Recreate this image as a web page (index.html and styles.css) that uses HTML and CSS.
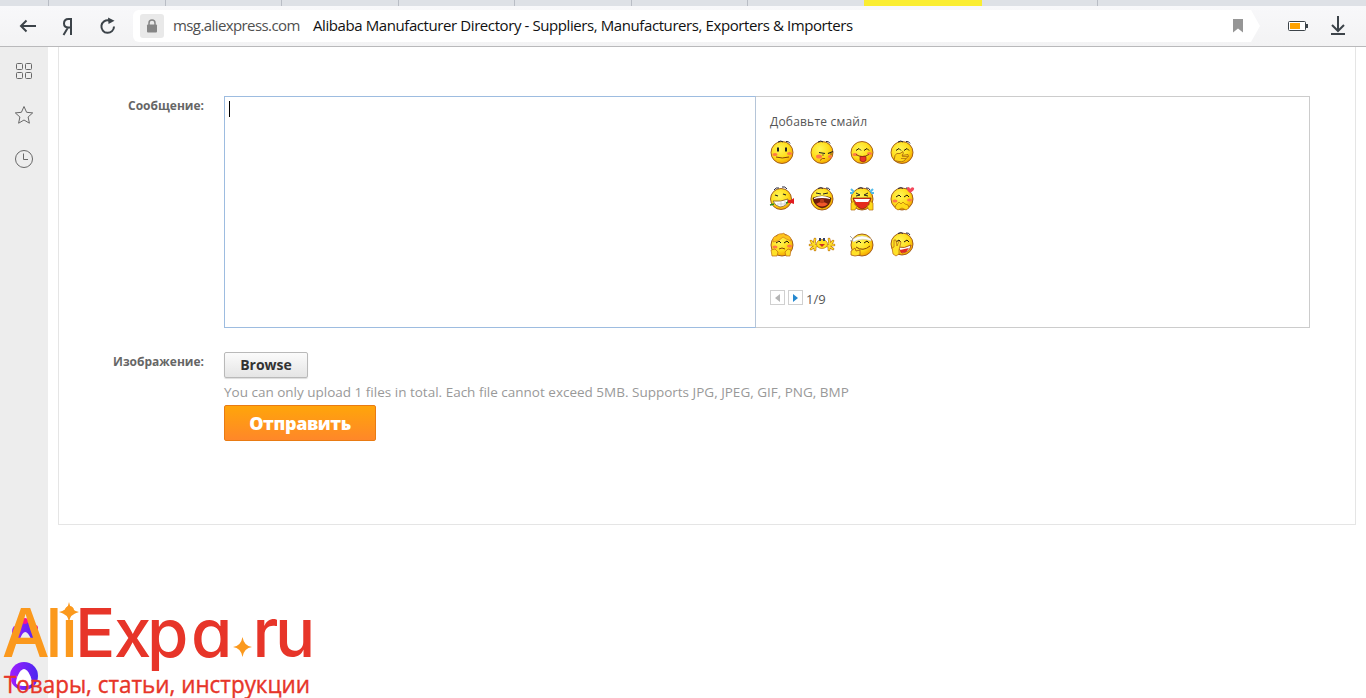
FILE: index.html
```html
<!DOCTYPE html>
<html lang="ru">
<head>
<meta charset="utf-8">
<title>Alibaba Manufacturer Directory</title>
<link rel="stylesheet" href="styles.css">
</head>
<body>
<header class="browser">
  <div class="tabs"><i></i><i></i><i></i><i></i><i></i><i></i><i></i><i class="tab-active"></i><i></i></div>
  <div class="toolbar">
    <svg class="nav-icons" width="133" height="40" viewBox="0 6 133 40" fill="none" stroke="#3c4349" stroke-width="2">
      <path d="M36 26H21M26.500 20.500L21 26L26.500 31.500"/>
      <path d="M71 35V19H68.500C65.500 19 64 21 64 23.500C64 26 66 27.500 68.500 27.500H71M68 27.500L63.500 35"/>
      <path d="M114 26.500A6.300 6.300 0 1 1 109 20.400"/><path d="M108 17.500L114.500 20.800L108.500 24Z" fill="#3c4349" stroke="none"/>
    </svg>
    <div class="address">
      <span class="lock"><svg width="12" height="14" viewBox="0 0 12 14"><path d="M3 6V4A3 3 0 0 1 9 4V6" fill="none" stroke="#858585" stroke-width="1.500"/><rect x="1" y="5.500" width="10" height="8" rx="1" fill="#858585"/></svg></span>
      <span class="domain">msg.aliexpress.com</span>
      <span class="title">Alibaba Manufacturer Directory - Suppliers, Manufacturers, Exporters &amp; Importers</span>
      <svg class="bookmark" width="10" height="14" viewBox="0 0 10 14"><path d="M0 0H10V13.500L5 9.500L0 13.500Z" fill="#969696"/></svg>
    </div>
    <svg class="tools" width="86" height="40" viewBox="1280 6 86 40">
      <rect x="1288.500" y="21.500" width="17" height="9" rx="1" fill="#fff" stroke="#3c4349"/><path d="M1306 24h2v4h-2z" fill="#3c4349"/><path d="M1290 23h10v6h-10z" fill="#ffa200"/>
      <path d="M1338 16V30.500M1332 25L1338 31L1344 25M1331 34H1345" fill="none" stroke="#3c4349" stroke-width="2"/>
    </svg>
  </div>
</header>
<div class="body">
  <aside class="rail">
    <svg width="20" height="20" viewBox="0 0 20 20"><g fill="none" stroke="#686868"><rect x="2.500" y="2.500" width="6" height="6" rx="1"/><rect x="11.500" y="2.500" width="6" height="6" rx="1"/><rect x="2.500" y="11.500" width="6" height="6" rx="1"/><rect x="11.500" y="11.500" width="6" height="6" rx="1"/></g></svg>
    <svg width="20" height="20" viewBox="0 0 20 20"><path d="M10 1.500L12.600 7.300L18.700 7.900L14.100 12L15.400 18.200L10 15L4.600 18.200L5.900 12L1.300 7.900L7.400 7.300Z" fill="none" stroke="#686868"/></svg>
    <svg width="20" height="20" viewBox="0 0 20 20"><circle cx="10" cy="10" r="8.500" fill="none" stroke="#686868"/><path d="M9.500 4.500V10.500H14" fill="none" stroke="#686868"/></svg>
  </aside>
  <main class="page">
    <form class="form">
      <label class="label">Сообщение:</label>
      <div class="composer">
        <div class="message"><span class="caret"></span></div>
        <div class="smiles">
          <p class="smile-title">Добавьте смайл</p>
          <svg class="smile-grid" width="150" height="124" viewBox="768 138 150 124">
            <defs>
              <radialGradient id="face" cx=".4" cy=".35" r=".65"><stop offset="0" stop-color="#fff65a"/><stop offset=".65" stop-color="#ffdc18"/><stop offset="1" stop-color="#f5a900"/></radialGradient>
              <g id="head"><circle r="11" fill="url(#face)" stroke="#985016" stroke-width=".9"/></g>
              <g id="brows"><path d="M-4-10.500Q-1-12.500 1-10.500M4-11Q7-11.500 8-9" fill="none" stroke="#26263a"/></g>
              <g id="happy"><path d="M-6-2L-3-4L-1-2M2-2L5-4L7-2" fill="none" stroke="#26160a"/></g>
              <g id="cheeks" fill="#ff7a48"><ellipse cx="-7" cy="2" rx="2.500" ry="1.500"/><ellipse cx="7.500" cy="1" rx="2.500" ry="1.500"/></g>
            </defs>
            <g transform="translate(782 152.500)"><use href="#head"/><use href="#brows"/><use href="#cheeks"/><path d="M-4-5V-1M4-5V-1" stroke="#222" stroke-width="2"/><path d="M-6 4.500Q0 6.500 7 4.500" fill="none" stroke="#85430a"/></g>
            <g transform="translate(822 152.500)"><use href="#head"/><use href="#brows"/><ellipse cx="-3" cy="4" rx="3" ry="2" fill="#ff7a48"/><ellipse cx="8" cy="4" rx="2" ry="1.500" fill="#ff7a48"/><path d="M-3 0L3 1M6 1L11-1M1 2V3M9 1V2" stroke="#222" stroke-width="1.200"/><path d="M-2 8Q0 5 3 6" fill="none" stroke="#a34714"/></g>
            <g transform="translate(862 152.500)"><use href="#head"/><use href="#cheeks"/><use href="#happy"/><path d="M-6 2Q0 6 7 2" fill="none" stroke="#85430a"/><path d="M-2 4H4V8Q1 11-2 8Z" fill="#eb3429" stroke="#8b2410" stroke-width=".7"/></g>
            <g transform="translate(902 152.500)"><use href="#head"/><use href="#brows"/><use href="#happy"/><path d="M-7 3Q-6 0-2 1L1-1Q2 1 0 3L6 2Q8 4 4 6Q2 10-3 9L-8 8Z" fill="#ffd719" stroke="#98500d" stroke-width=".7"/><path d="M0 4L6 4M-1 6L4 6" stroke="#98500d" stroke-width=".6"/></g>
            <g transform="translate(781 199)"><circle r="10.500" fill="url(#face)" stroke="#985016" stroke-width=".9"/><path d="M-7-9Q-5-12-2-11M1-12Q4-13 6-10" fill="none" stroke="#26263a"/><path d="M-6-4L-3-3M2-5L5-4" stroke="#222" stroke-width="1.200"/><path d="M-8 2Q0 3 7 0Q7 7-1 8Q-6 7-8 2" fill="#fff" stroke="#744318" stroke-width=".7"/><path d="M-4 5H6M0 3V8M4 2V7" stroke="#b7b7b7" stroke-width=".6"/><path d="M-11 6L-7 5M5 4L8 3" stroke="#268b23" stroke-width="1.500"/><path d="M7 1L10 1L13-1V5L10 4L7 4Z" fill="#e11b20"/></g>
            <g transform="translate(822 199)"><use href="#head"/><use href="#brows"/><path d="M-6-6L-1-5M6-6L1-5" stroke="#222"/><path d="M-9-1Q0-5 9-1Q8 8 0 9Q-8 7-9-1Z" fill="#711c0c" stroke="#381108" stroke-width=".6"/><path d="M-8-1Q0-5 8-1V0Q0-2-8 0Z" fill="#fff"/><path d="M-6 5Q0 1 6 5Q0 10-6 5" fill="#f2572b"/><circle cy="2" r="2.200" fill="#b63a19"/></g>
            <g transform="translate(862 199)"><use href="#head"/><path d="M-11-10L-8-7M-12-6H-9M11-10L8-7M12-6H9" stroke="#51bce9" stroke-width="2"/><use href="#brows"/><path d="M-6-6L-2-4L-6-3M6-6L2-4L6-3" fill="none" stroke="#222"/><path d="M-9-1H9Q7 9 0 10Q-7 8-9-1Z" fill="#e52a1b" stroke="#771c0b" stroke-width=".7"/><path d="M-8 0H8L6 3H-6Z" fill="#fff"/><path d="M-11 4L-8 2L-7 6L-5 7L-7 11H-11ZM11 4L8 2L7 6L5 7L7 11H11Z" fill="#ffda18" stroke="#b46b0d" stroke-width=".7"/></g>
            <g transform="translate(902 199)"><use href="#head"/><use href="#brows"/><use href="#cheeks"/><use href="#happy"/><path d="M8-6Q3-10 6-12Q8-12 8-10Q10-13 12-11Q13-9 8-6" fill="#f3485c"/><path d="M-7 9L-6 6L-3 3L-1 5L1 3L3 5L6 6L7 9L4 11L0 9L-4 11Z" fill="#ffda18" stroke="#b46b0d" stroke-width=".7"/></g>
            <g transform="translate(782 245)"><use href="#head"/><use href="#cheeks"/><use href="#happy"/><path d="M-9-3Q-10-9-5-9Q-4-12 0-11L2-12L3-10Q9-10 9-4Q4-6 1-8Q-3-3-9-3" fill="#ffc51b" stroke="#cf822c" stroke-width=".7"/><path d="M-3 4Q0 2 3 4" fill="none" stroke="#85430a"/><path d="M-11 5L-7 4L-4 7L-5 11H-10ZM9 5L6 4L3 7L4 11H8Z" fill="#ffe128" stroke="#bd6814" stroke-width=".7"/></g>
            <g transform="translate(822 244)"><path d="M-5 2L-8 1L-11-3M-8 1L-7-5M-8 1L-12 1M-7 2L-11 5M-7 2L-7 6M5 2L8 1L11-3M8 1L7-5M8 1L12 1M7 2L11 5M7 2L7 6" fill="none" stroke="#b86711" stroke-width="2.600" stroke-linecap="round"/><path d="M-5 2L-8 1L-11-3M-8 1L-7-5M-8 1L-12 1M-7 2L-11 5M-7 2L-7 6M5 2L8 1L11-3M8 1L7-5M8 1L12 1M7 2L11 5M7 2L7 6" fill="none" stroke="#ffe128" stroke-width="1.500" stroke-linecap="round"/><ellipse cy="0" rx="5.500" ry="4.500" fill="#ffdf20" stroke="#bd7811" stroke-width=".7"/><path d="M-2-6V-3M2-6V-3" stroke="#354066" stroke-width="2"/><path d="M-3 0H3L0 3Z" fill="#cf3022"/></g>
            <g transform="translate(862 245)"><use href="#head"/><path d="M-9-6Q0-12 9-6L9-4Q0-8-9-3Z" fill="#fff" stroke="#c5c5c5" stroke-width=".5"/><path d="M-9-6L-12-9M-9-5L-12-4" stroke="#aaa"/><use href="#happy"/><path d="M-6 2Q1 7 8 1" fill="none" stroke="#85430a"/><path d="M-11 6L-7 3L-6 6L-2 5V10L-7 11L-11 10Z" fill="#ffe128" stroke="#a95911" stroke-width=".8"/></g>
            <g transform="translate(902 244)"><use href="#head"/><use href="#brows"/><use href="#happy"/><path d="M-4 3Q2 5 9 1Q8 8 0 9Z" fill="#fff" stroke="#8c260c" stroke-width=".7"/><path d="M-2 6L7 4L4 8L-1 9Z" fill="#e32b21"/><path d="M-9 10L-10 4L-8 3L-8-4L-6-4L-5 2L-3-3L-1-2L-3 6L-3 10L-6 12Z" fill="#ffe128" stroke="#b46111" stroke-width=".7"/></g>
          </svg>
          <div class="pager"><span class="page-button"><svg width="5" height="8"><path d="M5 0V8L0 4Z" fill="#b5b5b5"/></svg></span><span class="page-button"><svg width="5" height="8"><path d="M0 0V8L5 4Z" fill="#2588cf"/></svg></span><span class="count">1/9</span></div>
        </div>
      </div>
      <label class="label">Изображение:</label>
      <div class="upload"><button class="browse" type="button">Browse</button><p class="hint">You can only upload 1 files in total. Each file cannot exceed 5MB. Supports JPG, JPEG, GIF, PNG, BMP</p><button class="send" type="button">Отправить</button></div>
    </form>
  </main>
</div>
<svg class="watermark" width="320" height="103" viewBox="0 595 320 103">
  <defs><linearGradient id="violet"><stop stop-color="#a01dff"/><stop offset="1" stop-color="#4a28f0"/></linearGradient></defs>
  <path d="M14 639Q10 631 14 626Q17 628 18 624Q24 619 32 624L37 627Q38 630 35 639H31Q25 625 20 639Z" fill="url(#violet)"/><circle cx="35" cy="628" r="3" fill="#fb158c"/><circle cx="25" cy="621" r="3" fill="#fb158c"/>
  <circle cx="24" cy="676" r="14" fill="url(#violet)"/><path d="M16 683C16 678 20 669 24 669S32 678 32 683C32 687 16 687 16 683Z" fill="#fff"/>
  <text class="wordmark" y="657" fill="#e73529"><tspan x="2 45.500 61" fill="#fb991d">Ali</tspan><tspan x="75 114 147 191">Expa</tspan><tspan class="point" x="239" y="650" fill="#fb991d">.</tspan><tspan x="252.500 275" y="657">ru</tspan></text>
  <path d="M69 602Q70 610 79 612Q70 614 69 622Q68 614 59 612Q68 610 69 602ZM242.500 637Q244 646 252 647Q244 648 242.500 657Q241 648 233 647Q241 646 242.500 637Z" fill="#fb991d"/>
  <text class="tagline" x="4" y="692.500" textLength="306" lengthAdjust="spacingAndGlyphs" fill="#e73529">Товары, статьи, инструкции</text>
</svg>
</body>
</html>
```
FILE: styles.css
```css
* { box-sizing: border-box; }
body { margin: 0; height: 698px; overflow: hidden; background: #fff; font-family: "Open Sans", "Noto Sans", sans-serif; color: #333; }
p { margin: 0; }
svg { display: block; flex-shrink: 0; }
.tabs { height: 6px; background: #dee1e6; display: grid; grid-template-columns: 49px 117px 116px 117px 116px 117px 116px 116px 118px 116px; }
.tabs i { border-right: 1px solid #b9bdc5; height: 6px; }
.tabs .tab-active { background: #faed32; border: 0; grid-column: 9; }
.toolbar { height: 41px; display: flex; background: linear-gradient(#f8f8fa, #f3f3f4); border-bottom: 1px solid #b9b9bb; }
.address { width: 1127px; height: 32px; margin-top: 4px; background: #fff; display: flex; align-items: center; padding-left: 7px; border-radius: 6px 0 0 6px; clip-path: polygon(0 0, 1118px 0, 1127px 50%, 1118px 100%, 0 100%); font-size: 15px; white-space: nowrap; }
.lock { width: 24px; height: 24px; background: #e9e9e9; border-radius: 3px; display: flex; align-items: center; justify-content: center; }
.domain { margin: -2px 0 0 9px; width: 140px; color: #505050; letter-spacing: -.59px; }
.title { width: 920px; margin-top: -2px; color: #111; letter-spacing: -.41px; }
.tools { margin-left: 20px; }
.body { height: 651px; display: flex; }
.rail { width: 48px; background: #ededed; padding-top: 14px; display: flex; flex-direction: column; align-items: center; gap: 24px; }
.page { width: 1298px; height: 478px; margin-left: 10px; border: 1px solid #e5e5e5; border-top: 0; padding-top: 49px; }
.form { display: grid; grid-template-columns: 145px 1086px; column-gap: 20px; row-gap: 24px; }
.label { text-align: right; font-size: 12px; font-weight: 700; line-height: 20px; color: #666; }
.composer { height: 232px; display: flex; border: 1px solid #ccc; }
.message { width: 532px; margin: -1px 0 -1px -1px; border: 1px solid #9dbce0; border-right-color: #b5c5d8; padding: 4px; }
.caret { display: block; width: 1px; height: 16px; background: #000; }
.smiles { padding: 15px 0 0 12px; }
.smile-title { padding-left: 2px; font-size: 12px; line-height: 20px; height: 26px; color: #555; letter-spacing: .2px; }
.pager { display: flex; gap: 3px; margin: 28px 0 0 2px; height: 20px; }
.page-button { width: 15px; height: 15px; border: 1px solid #d0d0d0; display: flex; align-items: center; justify-content: center; }
.count { font-size: 13px; line-height: 19px; color: #555; }
.upload { display: flex; flex-direction: column; align-items: flex-start; }
.browse { width: 84px; height: 26px; border: 1px solid #b9b9b9; border-radius: 2px; background: linear-gradient(#fbfbfb, #e5e5e5); box-shadow: 0 1px 1px #ddd; font: 700 14px "Open Sans", sans-serif; color: #333; padding: 0 0 2px; }
.hint { height: 27px; line-height: 29px; font-size: 13.5px; color: #999; white-space: nowrap; }
.send { width: 152px; height: 36px; border: 1px solid #e97b13; border-radius: 2px; background: linear-gradient(#ffa50a, #ff8729); font: 800 18px "Open Sans", sans-serif; letter-spacing: -.4px; color: #fff; padding: 0; }
.watermark { position: absolute; left: 0; top: 595px; overflow: visible; }
.wordmark { font: 500 67px Inter, sans-serif; font-feature-settings: "cv11"; }
.point { font-size: 20px; }
.tagline { font: 23.500px "Open Sans", "Noto Sans", sans-serif; stroke: #e73529; stroke-width: .4px; }
```
